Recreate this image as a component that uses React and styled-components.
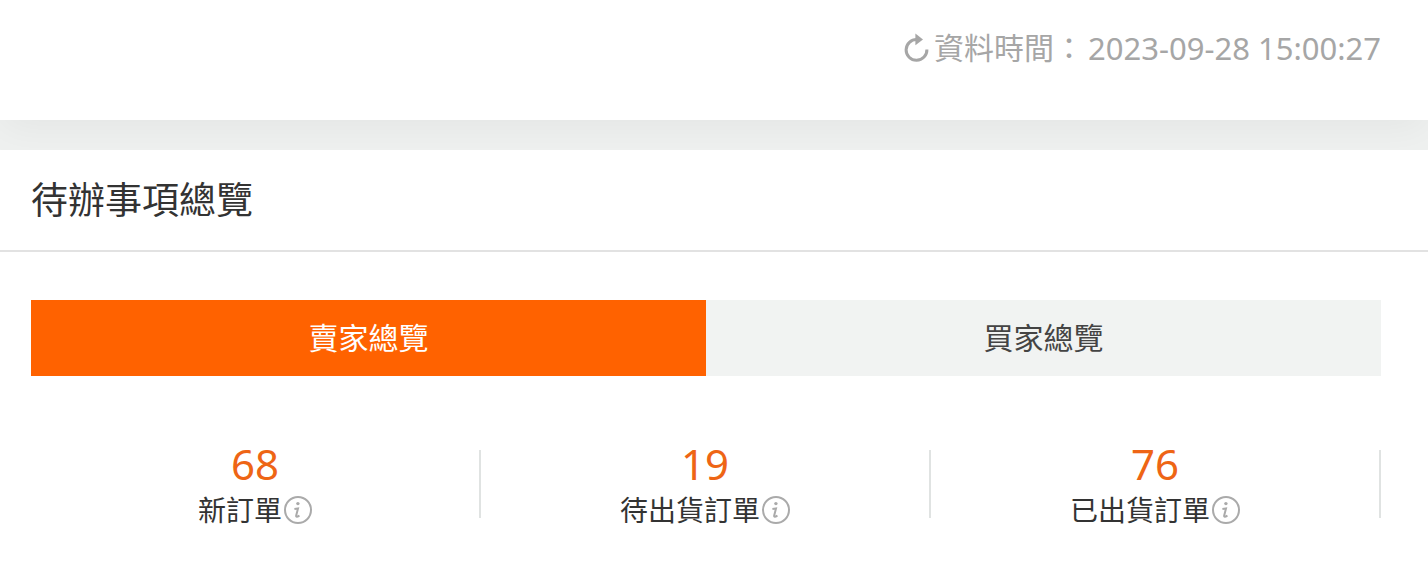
import React, { useState } from 'react'
import styled, { createGlobalStyle } from 'styled-components'

const tabs = [
    { id: 'seller', label: '賣家總覽' },
    { id: 'buyer', label: '買家總覽' },
]

const stats = {
    seller: [
        { label: '新訂單', value: 68 },
        { label: '待出貨訂單', value: 19 },
        { label: '已出貨訂單', value: 76 },
    ],
    buyer: [],
}

function RefreshIcon() {
    return (
        <svg width="26" height="30" viewBox="0 0 26 30" fill="none" aria-hidden="true">
            <path d="M13 6.5 A10.4 10.4 0 1 0 22.9 16.5" stroke="currentColor" strokeWidth="3" />
            <path d="M11.4 0.6 L19 6.6 L11.4 12.2 Z" fill="currentColor" />
        </svg>
    )
}

function InfoIcon() {
    return (
        <svg width="28" height="28" viewBox="0 0 28 28" fill="none" stroke="currentColor" aria-hidden="true">
            <circle cx="14" cy="14" r="13" strokeWidth="2" />
            <circle cx="13.9" cy="7.6" r="1.7" fill="currentColor" stroke="none" />
            <path d="M10.4 13 L14 12.4 L12.2 19.4 C11.8 21.2 13.2 21.2 15.4 19.4" strokeWidth="2" />
        </svg>
    )
}

function App() {
    const [active, setActive] = useState('seller')

  return (
    <>
        <GlobalStyle />
        <Header>
            <RefreshButton type="button">
                <RefreshIcon />
                <span>資料時間：</span>
                <Time dateTime="2023-09-28T15:00:27">2023-09-28 15:00:27</Time>
            </RefreshButton>
        </Header>
        <Panel>
            <PanelTitle>待辦事項總覽</PanelTitle>
            <PanelBody>
                <TabList role="tablist">
                    {tabs.map((tab) => (
                        <Tab
                            key={tab.id}
                            type="button"
                            role="tab"
                            aria-selected={active === tab.id}
                            $active={active === tab.id}
                            onClick={() => setActive(tab.id)}
                        >
                            {tab.label}
                        </Tab>
                    ))}
                </TabList>
                <StatList>
                    {stats[active].map((stat) => (
                        <Stat key={stat.label}>
                            <StatBody>
                                <StatValue>{stat.value}</StatValue>
                                <StatLabel>
                                    {stat.label}
                                    <InfoButton type="button" aria-label={stat.label}>
                                        <InfoIcon />
                                    </InfoButton>
                                </StatLabel>
                            </StatBody>
                        </Stat>
                    ))}
                </StatList>
            </PanelBody>
        </Panel>
    </>
  )
}

export default App;

const GlobalStyle = createGlobalStyle`
    * {
        box-sizing:border-box;
    }
    body {
        margin:0;
        background-color:#eff1f0;
        font-family:"Noto Sans", "Noto Sans CJK TC", sans-serif;
        color:#333;
    }
    button {
        padding:0;
        border:0;
        background:none;
        font-family:inherit;
        cursor:pointer;
    }
`

const Header = styled.header`
    display:flex;
    justify-content:flex-end;
    padding:24px 47px 48px 31px;
    background-color:#fff;
    box-shadow:0 8px 40px rgba(0, 0, 0, 0.05);
`

const RefreshButton = styled.button`
    display:flex;
    align-items:center;
    gap:4px;
    color:#a6a6a6;
    font-size:30px;
    line-height:48px;
`

const Time = styled.time`
    font-size:31px;
`

const Panel = styled.section`
    position:relative;
    min-height:calc(100vh - 150px);
    margin-top:30px;
    background-color:#fff;
`

const PanelTitle = styled.h2`
    margin:0;
    padding:26px 31px;
    border-bottom:2px solid #e2e2e2;
    font-size:37px;
    font-weight:400;
    line-height:48px;
`

const PanelBody = styled.div`
    padding:48px 47px 48px 31px;
`

const TabList = styled.div`
    display:flex;
`

const Tab = styled.button`
    flex:1;
    background-color:${props => props.$active ? '#ff6200' : '#f1f3f2'};
    color:${props => props.$active ? '#fff' : '#444'};
    font-size:30px;
    line-height:76px;
`

const StatList = styled.ul`
    display:grid;
    grid-template-columns:repeat(3, 1fr);
    margin:66px 0 0;
    padding:0;
    list-style:none;
`

const Stat = styled.li`
    display:flex;
    &::after {
        content:"";
        width:2px;
        height:68px;
        margin-top:8px;
        background-color:#e0e3e2;
    }
`

const StatBody = styled.div`
    flex:1;
    display:flex;
    flex-direction:column;
    align-items:center;
    gap:2px;
`

const StatValue = styled.strong`
    color:#ee6515;
    font-size:42px;
    font-weight:400;
    line-height:44px;
`

const StatLabel = styled.span`
    display:flex;
    align-items:center;
    font-size:28px;
    line-height:44px;
`

const InfoButton = styled.button`
    display:flex;
    margin-left:2px;
    color:#aaa;
`
